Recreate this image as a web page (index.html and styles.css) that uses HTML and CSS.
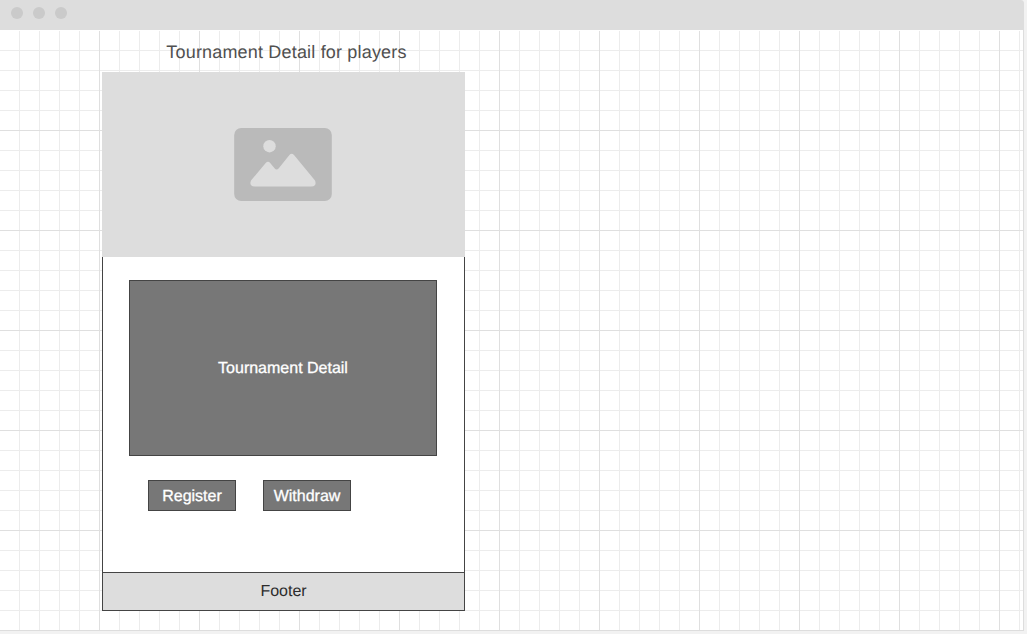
FILE: index.html
```html
<!DOCTYPE html>
<html lang="en">
<head>
<meta charset="utf-8">
<title>Tournament Detail for players</title>
<link rel="stylesheet" href="styles.css">
</head>
<body>
<div class="window">
  <header class="titlebar">
    <span class="dot"></span><span class="dot"></span><span class="dot"></span>
  </header>
  <main class="canvas">
    <h1 class="title">Tournament Detail for players</h1>
    <section class="screen">
      <div class="hero">
        <svg class="picture" viewBox="0 0 98 73" width="98" height="73">
          <rect x="0.2" width="97.6" height="73" rx="7" fill="#bababa"/>
          <circle cx="35.5" cy="18.2" r="6.2" fill="#dddddd"/>
          <path d="M17 52.5L31.7 35.1Q34 32.4 36.2 35.1L40.5 40.3Q42.6 42.7 44.8 40.3L55.4 27.1Q57.7 24.2 60 27.1L81 52.5Q83.2 58 77.5 58.5H20.5Q14.8 58 17 52.5Z" fill="#dddddd"/>
        </svg>
      </div>
      <div class="content">
        <div class="detail"><span class="label">Tournament Detail</span></div>
        <div class="actions">
          <button class="action"><span class="label">Register</span></button>
          <button class="action"><span class="label">Withdraw</span></button>
        </div>
      </div>
      <footer class="footer"><span class="footer-label">Footer</span></footer>
    </section>
  </main>
</div>
</body>
</html>
```
FILE: styles.css
```css
* { box-sizing: border-box; }
body {
  margin: 0;
  height: 634px;
  overflow: hidden;
  background: #f2f2f2;
  font-family: "Liberation Sans", Arial, sans-serif;
  text-rendering: geometricPrecision;
}
.window { width: 1024px; height: 631px; background: #fff; border-top-right-radius: 3px; }
.titlebar {
  display: flex;
  align-items: center;
  gap: 10px;
  height: 30px;
  padding: 0 0 4px 11px;
  background: #ddd;
  border-top-right-radius: 3px;
}
.dot { width: 12px; height: 12px; border-radius: 50%; background: #cacaca; }
.canvas {
  height: 601px;
  padding: 12px 0 0 102px;
  border-right: 1px solid #ddd;
  border-bottom: 1px solid #ddd;
  background-color: #fff;
  background-image:
    linear-gradient(90deg, #dfdfdf 1px, transparent 1px),
    linear-gradient(#dfdfdf 1px, transparent 1px),
    linear-gradient(90deg, #ececec 1px, transparent 1px),
    linear-gradient(#ececec 1px, transparent 1px);
  background-size: 100px 100px, 100px 100px, 20px 20px, 20px 20px;
  background-position: 99px 0, 0 100px, 19px 0, 0 20px;
  background-clip: padding-box;
}
.canvas::before { content: ""; display: block; height: 1px; margin: -12px 0 11px -102px; background: #fff; }
.title {
  width: 369px;
  height: 30px;
  margin: 0;
  color: #505050;
  font-size: 18px;
  font-weight: 400;
  line-height: 20px;
  letter-spacing: 0.18px;
  text-align: center;
}
.screen { display: flex; flex-direction: column; width: 363px; height: 539px; }
.hero { display: flex; align-items: center; justify-content: center; height: 185px; padding-right: 1px; background: #ddd; }
.content {
  height: 315px;
  padding: 23px 26px 0;
  border: solid #444;
  border-width: 0 1px;
  background: #fff;
}
.detail {
  display: flex;
  align-items: center;
  justify-content: center;
  width: 308px;
  height: 176px;
  padding-top: 2px;
  border: 1px solid #444;
  background: #777;
}
.actions { display: flex; gap: 27px; padding: 24px 0 0 19px; }
.action {
  width: 88px;
  height: 31px;
  padding: 2px 0 0;
  border: 1px solid #444;
  background: #777;
  font-family: inherit;
  text-rendering: inherit;
}
.label { color: #fff; font-size: 16px; line-height: 18px; -webkit-text-stroke: 0.3px #fff; }
.footer {
  display: flex;
  align-items: center;
  justify-content: center;
  height: 39px;
  padding-top: 1px;
  border: 1px solid #444;
  background: #ddd;
}
.footer-label { color: #2c2c2c; font-size: 16px; line-height: 18px; }
```
